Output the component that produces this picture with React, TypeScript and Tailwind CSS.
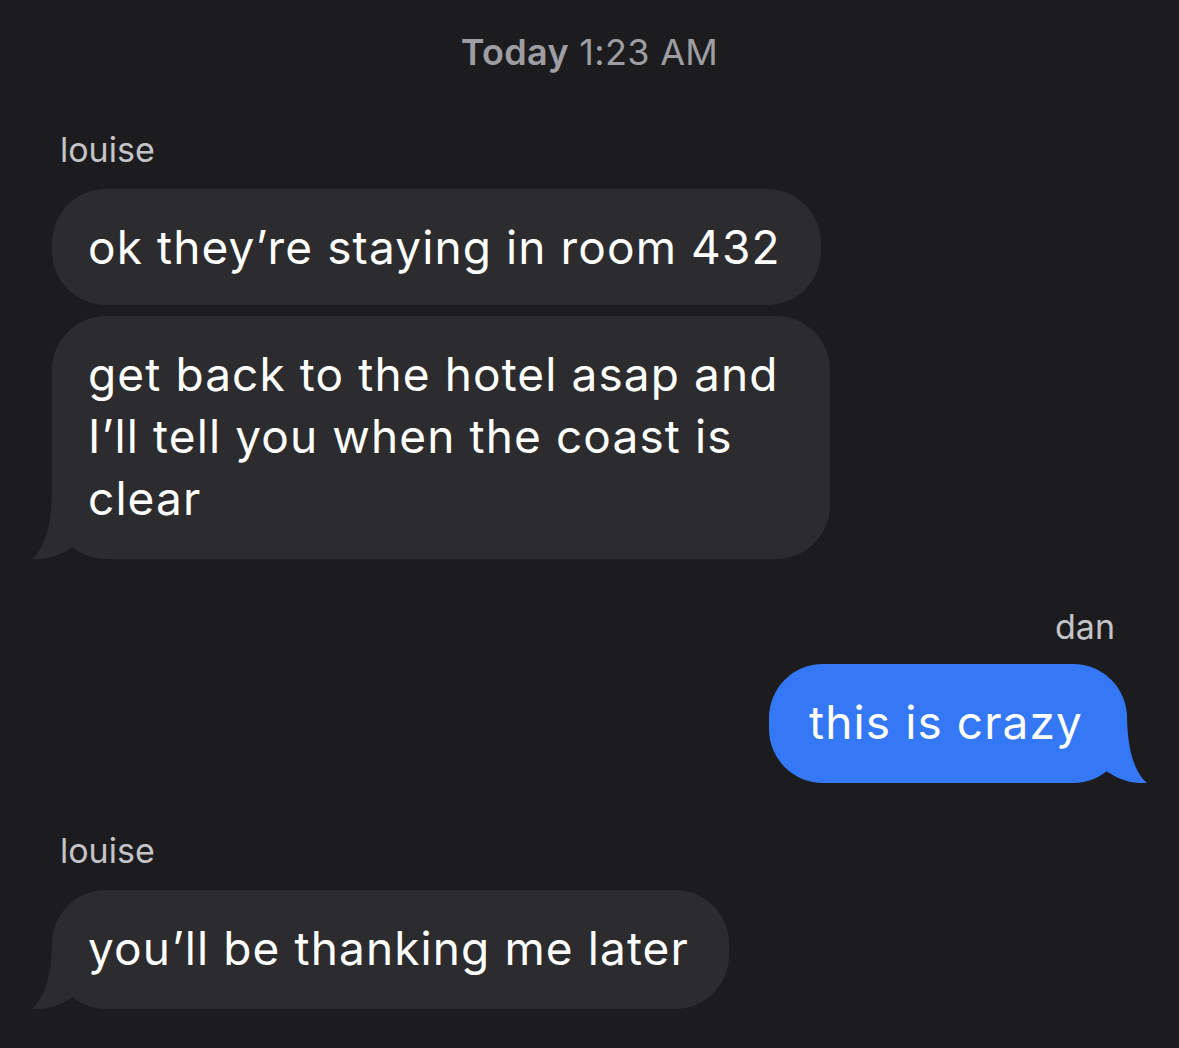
import React from 'react';

type Side = 'left' | 'right';

function Tail({ side, color }: { side: Side; color: string }) {
  // little hook at the bottom corner of the last bubble in a group
  return (
    <svg
      width="44"
      height="70"
      viewBox="0 0 44 70"
      className={`absolute bottom-0 ${side === 'left' ? '-left-5' : '-right-5 -scale-x-100'}`}
    >
      <path d="M20 0 C20 33 14 58 0 70 C16 71 30 66 42 57 L42 0 Z" fill={color} />
    </svg>
  );
}

function Bubble({
  side,
  tail,
  className = '',
  children,
}: {
  side: Side;
  tail?: boolean;
  className?: string;
  children: React.ReactNode;
}) {
  const incoming = side === 'left';
  return (
    <div
      className={`relative rounded-[54px] pt-[27px] text-[46px] leading-[62px] tracking-[1.1px] text-white ${
        tail ? 'pb-[30px]' : 'pb-[27px]'
      } ${incoming ? 'bg-[#2c2c2e] pl-9 pr-10 self-start' : 'bg-[#3478f6] pl-10 pr-11 self-end'} ${className}`}
    >
      {tail && <Tail side={side} color={incoming ? '#2c2c2e' : '#3478f6'} />}
      <span className="relative">{children}</span>
    </div>
  );
}

export default function App() {
  return (
    <div
      className="w-[1179px] h-[1048px] overflow-hidden bg-[#1c1c1e] px-[52px]"
      style={{ fontFamily: 'Inter, "Noto Sans", sans-serif' }}
    >
      {/* Timestamp */}
      <div className="pt-[30px] text-center text-[36px] leading-[44px] tracking-[0.3px] text-[#9d9da2]">
        <span className="font-semibold">Today</span> 1:23 AM
      </div>

      <div className="flex flex-col">
        <div className="mt-[56px] ml-2 text-[34px] leading-[40px] text-[#c4c4c8]">louise</div>
        <div className="mt-[19px] flex flex-col gap-[11px]">
          <Bubble side="left">ok they’re staying in room 432</Bubble>
          <Bubble side="left" tail className="w-[778px]">
            get back to the hotel asap and I’ll tell you when the coast is clear
          </Bubble>
        </div>

        <div className="mt-[48px] mr-3 self-end text-[34px] leading-[40px] text-[#c4c4c8]">dan</div>
        <div className="mt-[17px] flex flex-col">
          <Bubble side="right" tail>
            this is crazy
          </Bubble>
        </div>

        <div className="mt-[48px] ml-2 text-[34px] leading-[40px] text-[#c4c4c8]">louise</div>
        <div className="mt-[19px] flex flex-col">
          <Bubble side="left" tail>
            you’ll be thanking me later
          </Bubble>
        </div>
      </div>
    </div>
  );
}
